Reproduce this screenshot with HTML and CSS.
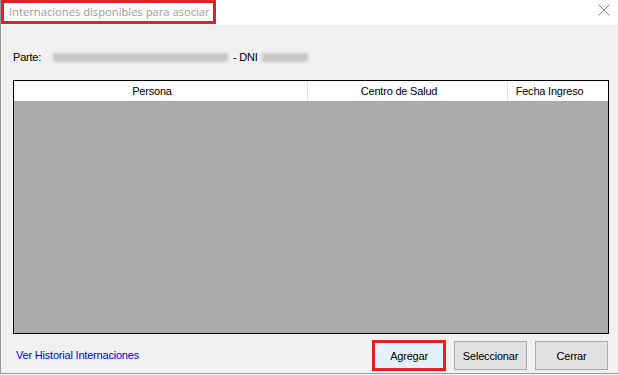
FILE: index.html
```html
<!DOCTYPE html>
<html lang="es">
<head>
    <meta charset="UTF-8">
    <title>Internaciones disponibles para asociar</title>
    <link rel="stylesheet" href="styles.css">
</head>
<body>
    <div class="window">
        <div class="titlebar">
            <span class="title">Internaciones disponibles para asociar</span>
            <svg class="close" width="12" height="12" viewBox="0 0 12 12">
                <path d="M0.5 0.5 L11.5 11.5 M11.5 0.5 L0.5 11.5" stroke="#7a7a7a" stroke-width="0.9" fill="none"/>
            </svg>
        </div>
        <div class="content">
            <div class="parte-row">
                <span class="label">Parte:</span>
                <span class="blur blur-name"></span>
                <span class="dni">- DNI</span>
                <span class="blur blur-dni"></span>
            </div>
            <div class="grid">
                <div class="grid-header">
                    <div class="col col-persona">Persona</div>
                    <div class="col col-centro">Centro de Salud</div>
                    <div class="col col-fecha">Fecha Ingreso</div>
                </div>
                <div class="grid-body"></div>
            </div>
            <div class="footer">
                <a class="link" href="#">Ver Historial Internaciones</a>
                <div class="buttons">
                    <button class="btn btn-focus">Agregar</button>
                    <button class="btn">Seleccionar</button>
                    <button class="btn">Cerrar</button>
                </div>
            </div>
        </div>
    </div>
</body>
</html>
```

FILE: styles.css
```css
html, body {
    margin: 0;
    padding: 0;
}
body {
    width: 618px;
    height: 375px;
    background: #f0f0f0;
    font-family: 'Liberation Sans', Arial, sans-serif;
    font-size: 11px;
    letter-spacing: -0.2px;
    color: #000;
    overflow: hidden;
}
.window {
    height: 373px;
    display: flex;
    flex-direction: column;
    border-left: 1px solid #9a9a9a;
    border-bottom: 1px solid #a0a0a0;
    background: #f0f0f0;
}
.titlebar {
    height: 25px;
    background: #fff;
    display: flex;
    justify-content: space-between;
    align-items: flex-start;
}
.title {
    box-sizing: border-box;
    height: 24px;
    width: 215px;
    border: 3px solid #ec1c24;
    padding: 0 5px;
    font-family: 'Open Sans', 'Noto Sans', sans-serif;
    font-size: 11.2px;
    letter-spacing: 0;
    line-height: 18px;
    color: #9b9b9b;
    white-space: nowrap;
}
.close {
    margin: 4px 8px 0 0;
}
.content {
    flex: 1;
    display: flex;
    flex-direction: column;
    padding: 0 9px 0 12px;
}
.parte-row {
    margin-top: 25px;
    height: 14px;
    line-height: 14px;
    display: flex;
    align-items: center;
}
.label {
    width: 40px;
}
.blur {
    display: inline-block;
    height: 9px;
    background: #c6c6c6;
    filter: blur(1.8px);
}
.blur-name {
    width: 175px;
    margin-right: 5px;
}
.dni {
    margin-right: 4px;
}
.blur-dni {
    width: 46px;
}
.grid {
    margin-top: 16px;
    height: 254px;
    box-sizing: border-box;
    border: 1px solid #000;
    display: flex;
    flex-direction: column;
}
.grid-header {
    height: 20px;
    background: #fff;
    display: flex;
}
.col {
    box-sizing: border-box;
    text-align: center;
    line-height: 20px;
    padding-right: 17px;
    border-right: 1px solid #e5e5e5;
}
.col-persona {
    width: 294px;
}
.col-centro {
    width: 200px;
}
.col-fecha {
    flex: 1;
    border-right: none;
}
.grid-body {
    flex: 1;
    background: #ababab;
}
.footer {
    flex: 1;
    display: flex;
    justify-content: space-between;
    align-items: flex-start;
}
.link {
    margin: 14px 0 0 3px;
    line-height: 14px;
    color: #0000ff;
    text-decoration: none;
}
.buttons {
    display: flex;
    gap: 8px;
    margin: 6px 1px 0 0;
    align-items: flex-start;
}
.btn {
    box-sizing: border-box;
    width: 73px;
    height: 29px;
    margin-top: 1px;
    border: 1px solid #adadad;
    background: #e1e1e1;
    font-family: 'Liberation Sans', Arial, sans-serif;
    font-size: 11px;
    letter-spacing: -0.2px;
    color: #000;
    padding: 0;
}
.btn-focus {
    width: 74px;
    height: 31px;
    margin-top: 0;
    border: 3px solid #ec1c24;
    background: #e5f1fb;
}
```
